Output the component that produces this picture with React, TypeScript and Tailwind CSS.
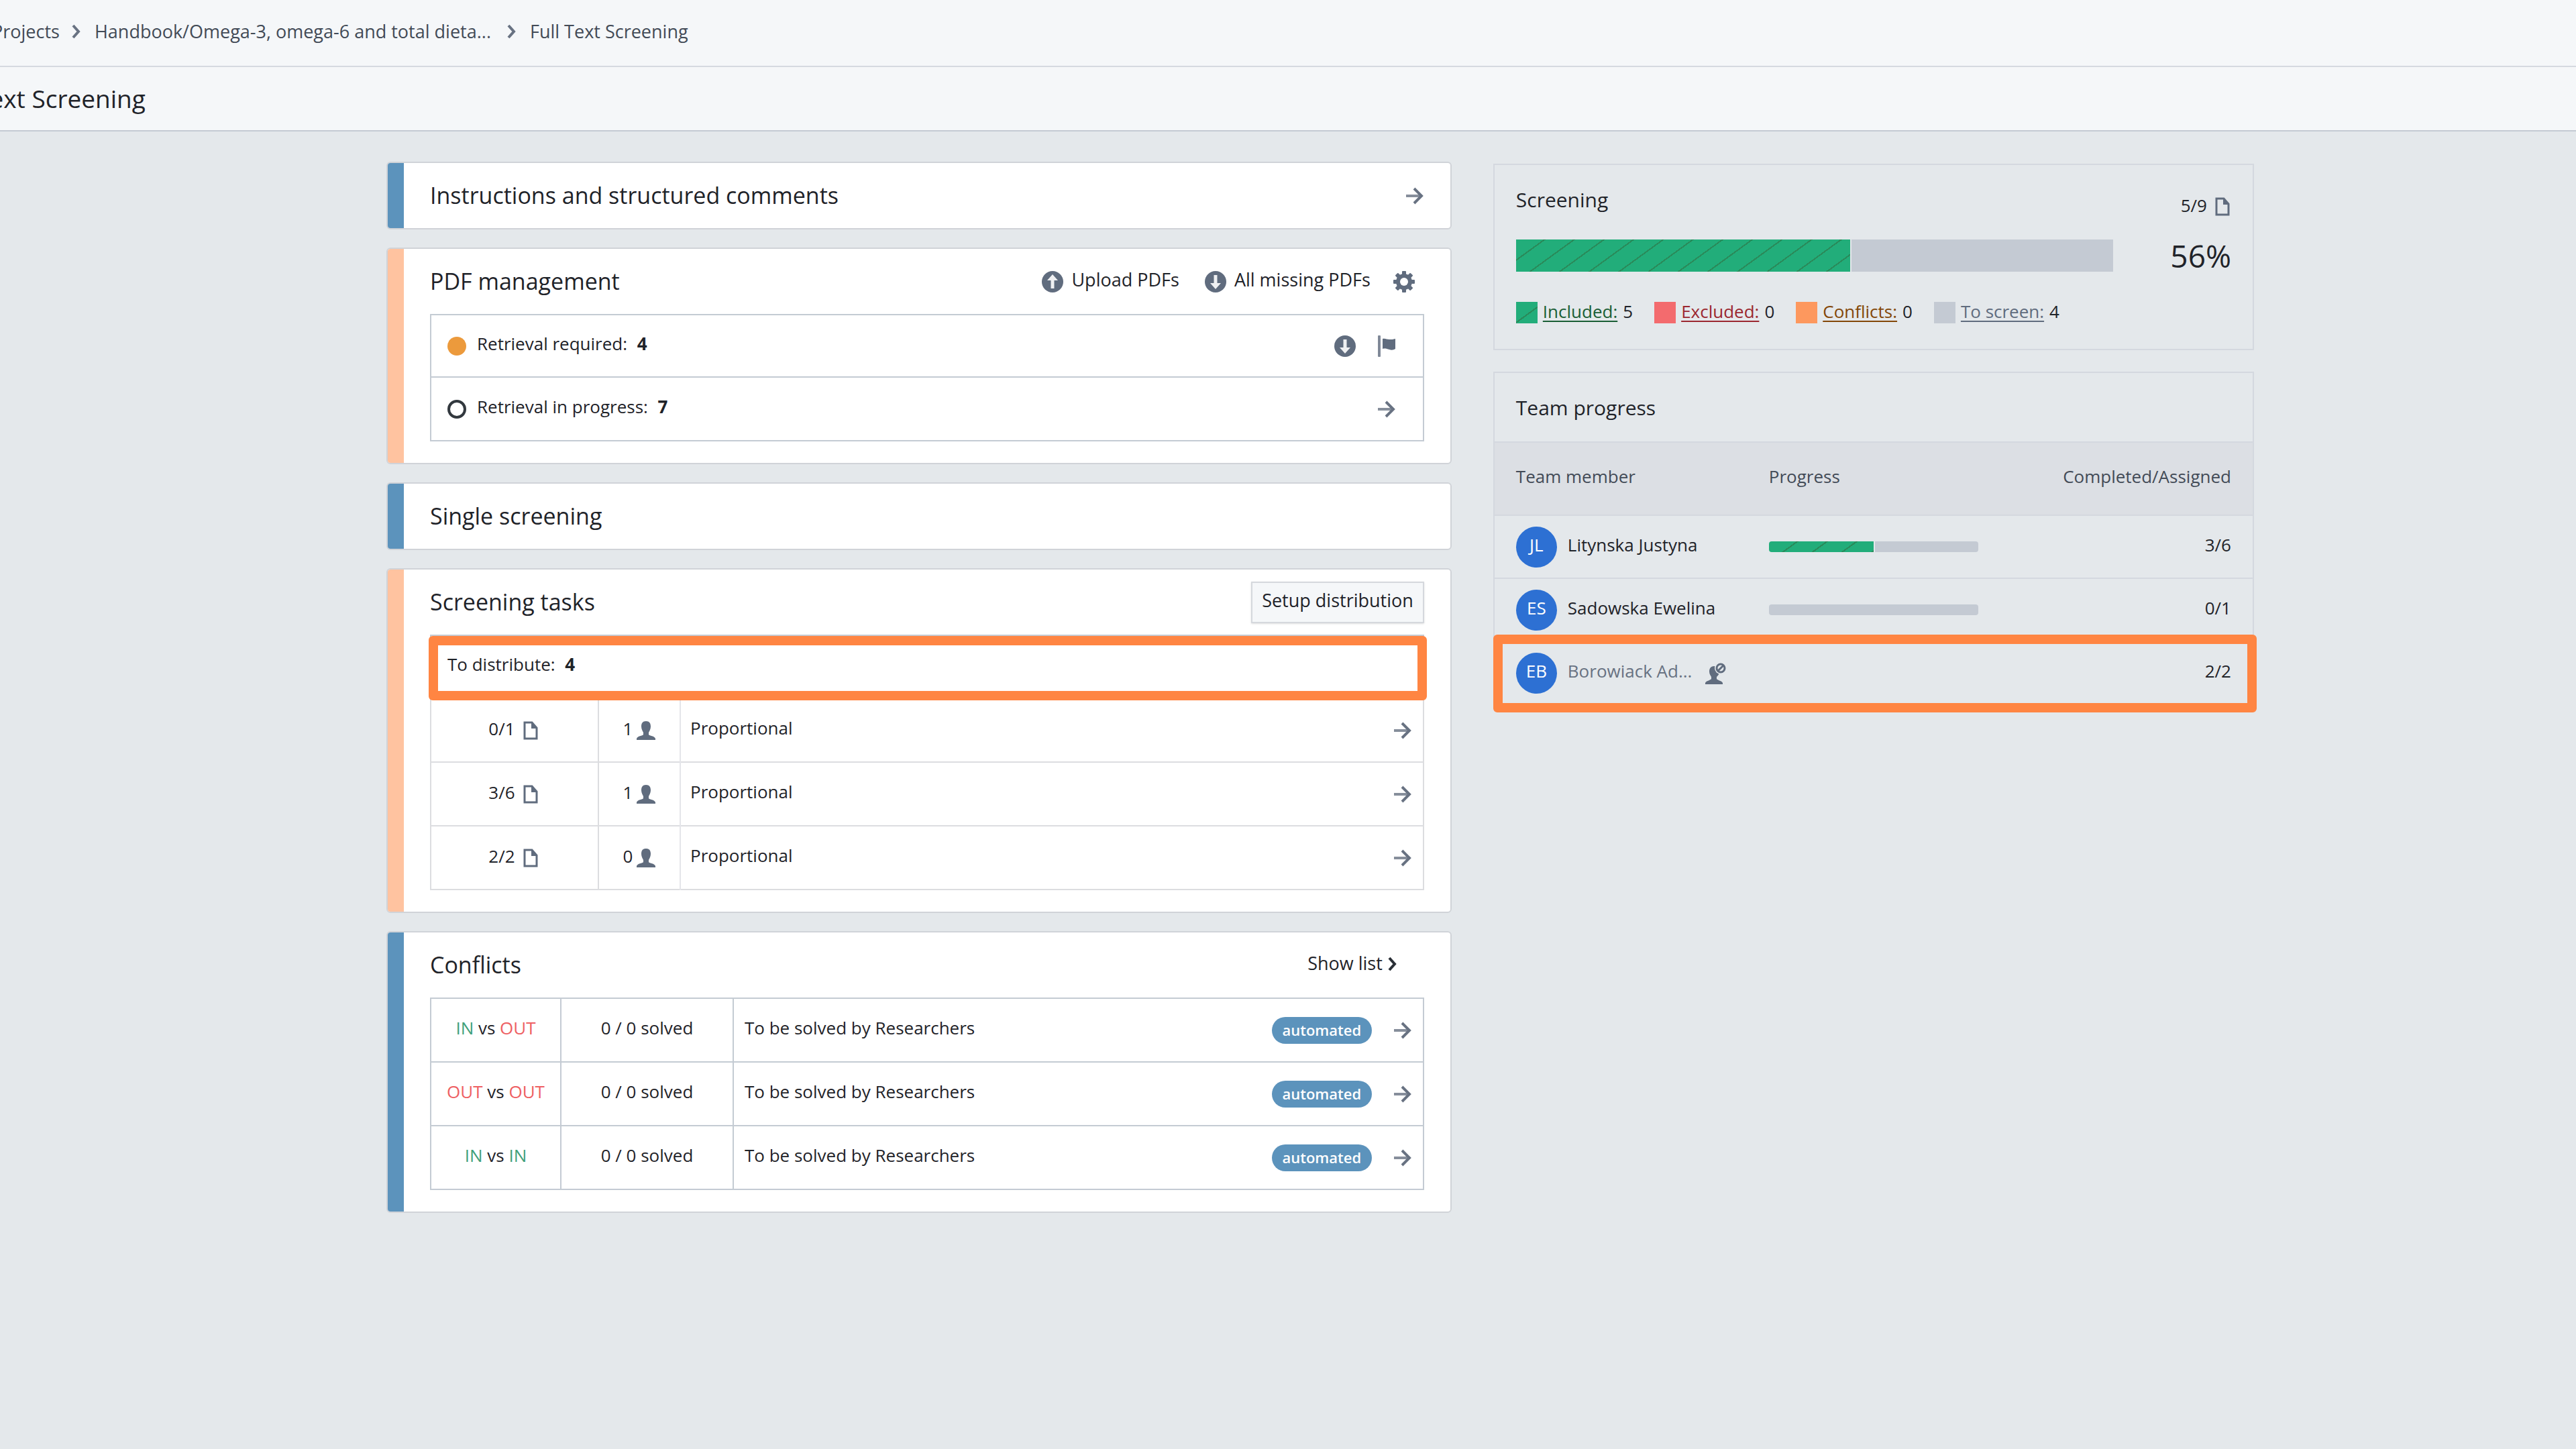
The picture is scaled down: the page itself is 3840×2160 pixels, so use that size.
import { ReactNode } from "react";

type CardProps = {
  title: string;
  tone: "blue" | "peach";
  action?: ReactNode;
  children?: ReactNode;
};

type Member = {
  initials: string;
  name: string;
  done: number;
  assigned: number;
  removed?: boolean;
};

const stripes =
  "bg-[repeating-linear-gradient(144deg,#22ad7a_0_24px,#2a8a5a_24px_26px)]";

const ArrowIcon = () => (
  <svg className="size-7 text-[#687282]" viewBox="0 0 28 28" fill="none" stroke="currentColor" strokeWidth="4">
    <path d="M1 14h24" strokeOpacity=".8" />
    <path d="M13 3l11 11-11 11" />
  </svg>
);

const ChevronIcon = ({ className }: { className: string }) => (
  <svg className={className} viewBox="0 0 14 22" fill="none" stroke="currentColor" strokeWidth="4">
    <path d="M2 2l8 9-8 9" />
  </svg>
);

const CircleArrowIcon = ({ up = false }: { up?: boolean }) => (
  <svg className="size-8 text-[#606c7e]" viewBox="0 0 32 32">
    <circle cx="16" cy="16" r="16" fill="currentColor" />
    <path
      d={up ? "M16 5l8 9h-5.500v12h-5V14H8z" : "M16 27l-8-9h5.500V6h5v12H24z"}
      fill="#fff"
      fillOpacity=".9"
    />
  </svg>
);

const GearIcon = () => (
  <svg className="size-8 text-[#606c7e]" viewBox="0 0 32 32">
    {[0, 45, 90, 135].map((angle) => (
      <rect key={angle} x="13" y="0" width="6" height="32" rx="1" fill="currentColor" transform={`rotate(${angle} 16 16)`} />
    ))}
    <circle cx="16" cy="16" r="12" fill="currentColor" />
    <circle cx="16" cy="16" r="6" fill="#fff" />
  </svg>
);

const FlagIcon = () => (
  <svg className="h-8 w-7 text-[#606c7e]" viewBox="0 0 28 32" fill="currentColor">
    <rect x="1" y="0" width="4" height="32" rx="1" fillOpacity=".8" />
    <path d="M8 5c4-1 6 1 10 1 3 0 6 0 9-1v15c-3 2-6 2-9 1-4-1-6-2-10-1z" />
  </svg>
);

const FileIcon = () => (
  <svg className="h-7 w-[22px] text-[#606c7e]" viewBox="0 0 22 28">
    <path d="M2 2h11l7 8v16H2z" fill="none" stroke="currentColor" strokeWidth="3" />
    <path d="M12 1l9 10h-9z" fill="currentColor" />
  </svg>
);

const PersonIcon = () => (
  <svg className="size-7 text-[#606c7e]" viewBox="0 0 28 28" fill="currentColor">
    <path d="M14 0c5 0 7 3 7 8 0 4-2 7-3 9v3c1 2 9 2 10 6v2H0v-2c1-4 9-4 10-6v-3c-1-2-3-5-3-9 0-5 2-8 7-8z" />
  </svg>
);

const PersonRemovedIcon = () => (
  <svg className="size-8 text-[#606c7e]" viewBox="0 0 32 32">
    <path
      d="M13 5c-5 0-7 4-7 8 0 4 2 6 3 8v3c-1 2-8 3-9 6v2h26v-2c-1-3-8-4-9-6v-3c2-2 4-4 4-8 0-5-3-8-8-8z"
      fill="currentColor"
    />
    <circle cx="23" cy="8" r="9" fill="#e4e8eb" />
    <circle cx="23" cy="8" r="6" fill="none" stroke="currentColor" strokeWidth="3" />
    <path d="M19 12l8-8" stroke="currentColor" strokeWidth="3" />
  </svg>
);

const ArrowLink = ({ label }: { label: string }) => (
  <a href="#" aria-label={label} className="block">
    <ArrowIcon />
  </a>
);

const Card = ({ title, tone, action, children }: CardProps) => (
  <section className="flex overflow-hidden rounded-md border-2 border-[#d0d3d8] bg-white">
    <div className={tone === "blue" ? "w-6 shrink-0 bg-[#5c93bc]" : "w-6 shrink-0 bg-[#ffc3a0]"} />
    <div className="min-w-0 flex-1 px-[39px]">
      <div className="flex h-[97px] items-center justify-between text-[27px]">
        <h2 className="text-[34px]">{title}</h2>
        {action}
      </div>
      {children && <div className="pb-8">{children}</div>}
    </div>
  </section>
);

const tasks = [
  { docs: "0/1", people: 1 },
  { docs: "3/6", people: 1 },
  { docs: "2/2", people: 0 },
];

const conflicts = [
  ["IN", "OUT"],
  ["OUT", "OUT"],
  ["IN", "IN"],
];

const legend = [
  { label: "Included:", value: 5, box: stripes, text: "text-[#1a5e35]" },
  { label: "Excluded:", value: 0, box: "bg-[#f36b6e]", text: "text-[#9b2730]" },
  { label: "Conflicts:", value: 0, box: "bg-[#fd985e]", text: "text-[#834708]" },
  { label: "To screen:", value: 4, box: "bg-[#c4cad3]", text: "text-[#606c7e]" },
];

const members: Member[] = [
  { initials: "JL", name: "Litynska Justyna", done: 3, assigned: 6 },
  { initials: "ES", name: "Sadowska Ewelina", done: 0, assigned: 1 },
  { initials: "EB", name: "Borowiack Ad...", done: 2, assigned: 2, removed: true },
];

const Verdict = ({ value }: { value: string }) => (
  <span className={value === "IN" ? "text-[#41a07a]" : "text-[#ee6063]"}>{value}</span>
);

const PdfManagement = () => (
  <Card
    title="PDF management"
    tone="peach"
    action={
      <div className="flex items-center pr-3.5">
        <button className="mr-[38px] flex items-center gap-3">
          <CircleArrowIcon up />
          <span className="pb-1">Upload PDFs</span>
        </button>
        <button className="mr-[34px] flex items-center gap-3">
          <CircleArrowIcon />
          <span className="pb-1">All missing PDFs</span>
        </button>
        <button aria-label="PDF settings">
          <GearIcon />
        </button>
      </div>
    }
  >
    <ul className="divide-y-2 divide-[#c4cbd3] border-2 border-[#c4cbd3]">
      <li className="flex h-[93px] items-center pr-10 pl-6">
        <span className="size-7 rounded-full bg-[#ec9a3c]" />
        <span className="flex-1 pb-1.5 pl-4">
          Retrieval required: <b className="ml-2 font-bold">4</b>
        </span>
        <button aria-label="Download" className="mr-8">
          <CircleArrowIcon />
        </button>
        <button aria-label="Flag">
          <FlagIcon />
        </button>
      </li>
      <li className="flex h-[93px] items-center pr-10 pl-6">
        <span className="size-7 rounded-full border-4 border-[#32383e]" />
        <span className="flex-1 pb-1.5 pl-4">
          Retrieval in progress: <b className="ml-2 font-bold">7</b>
        </span>
        <ArrowLink label="Open retrieval in progress" />
      </li>
    </ul>
  </Card>
);

const ScreeningTasks = () => (
  <Card
    title="Screening tasks"
    tone="peach"
    action={
      <button className="h-[62px] border-2 border-[#d5d8dd] bg-[#f5f7f9] px-3.5 pb-1 shadow-sm">
        Setup distribution
      </button>
    }
  >
    <div className="relative">
      <table className="w-full table-fixed border-collapse">
        <colgroup>
          <col className="w-[250px]" />
          <col className="w-[122px]" />
          <col />
          <col className="w-[45px]" />
        </colgroup>
        <tbody>
          <tr className="h-[94px] border-2 border-[#c4cbd3]">
            <td colSpan={4} className="pb-2 pl-6">
              To distribute: <b className="ml-2 font-bold">4</b>
            </td>
          </tr>
          {tasks.map((task) => (
            <tr key={task.docs} className="h-[95px] border-2 border-[#dcdde0]">
              <td className="border-r-2 border-[#dcdde0]">
                <div className="flex items-center justify-center gap-3 pr-1">
                  <span className="pb-1">{task.docs}</span>
                  <FileIcon />
                </div>
              </td>
              <td className="border-r-2 border-[#e4e5ea]">
                <div className="flex items-center justify-center gap-1.5">
                  <span className="pb-1">{task.people}</span>
                  <PersonIcon />
                </div>
              </td>
              <td className="pb-1.5 pl-3.5">Proportional</td>
              <td>
                <ArrowLink label="Open task" />
              </td>
            </tr>
          ))}
        </tbody>
      </table>
      {/* highlight frame over the first row */}
      <div className="pointer-events-none absolute -right-1 -left-0.5 top-0.5 h-24 rounded-md border-[14px] border-[#ff8542]" />
    </div>
  </Card>
);

const Conflicts = () => (
  <Card
    title="Conflicts"
    tone="blue"
    action={
      <a href="#" className="flex items-center gap-2 pr-10 pb-1">
        Show list
        <ChevronIcon className="h-[22px] w-3.5 text-[#2a2f36]" />
      </a>
    }
  >
    <table className="w-full table-fixed border-collapse">
      <colgroup>
        <col className="w-[194px]" />
        <col className="w-[257px]" />
        <col />
        <col className="w-[181px]" />
        <col className="w-[45px]" />
      </colgroup>
      <tbody>
        {conflicts.map(([left, right]) => (
          <tr key={left + right} className="h-[95px] border-2 border-[#c4cbd3]">
            <td className="border-r-2 border-[#c4cbd3] pb-1.5 text-center">
              <Verdict value={left} /> vs <Verdict value={right} />
            </td>
            <td className="border-r-2 border-[#c4cbd3] pb-1.5 text-center">0 / 0 solved</td>
            <td className="pb-1.5 pl-4">To be solved by Researchers</td>
            <td>
              <span className="flex h-10 w-[149px] items-center justify-center rounded-full bg-[#5c93bc] text-[22px] font-semibold text-white">
                automated
              </span>
            </td>
            <td>
              <ArrowLink label="Open conflict" />
            </td>
          </tr>
        ))}
      </tbody>
    </table>
  </Card>
);

const ScreeningSummary = () => (
  <section className="border-2 border-[#d4d8df] px-8 pt-8 pb-9">
    <div className="flex h-11 items-start justify-between">
      <h3 className="text-[30px] leading-10">Screening</h3>
      <div className="flex items-center gap-3 pt-3 pr-0.5">
        <span className="pb-1 leading-8">5/9</span>
        <FileIcon />
      </div>
    </div>
    <div className="mt-[35px] flex items-center">
      <div className="flex h-12 flex-1 gap-0.5">
        <div className={`${stripes} w-[56%]`} />
        <div className="flex-1 bg-[#c4cad3]" />
      </div>
      <span className="w-[176px] text-right text-[46px] leading-12">56%</span>
    </div>
    <ul className="mt-[43px] flex gap-8">
      {legend.map((item) => (
        <li key={item.label} className="flex items-center gap-2">
          <span className={`${item.box} size-8`} />
          <a href="#" className={`${item.text} pb-1 leading-8 underline decoration-2 underline-offset-4`}>
            {item.label}
          </a>
          <span className="pb-1 leading-8">{item.value}</span>
        </li>
      ))}
    </ul>
  </section>
);

const TeamProgress = () => (
  <section className="relative mt-8 border-2 border-[#d4d8df]">
    <h3 className="flex h-[102px] items-center px-8 text-[30px]">Team progress</h3>
    <table className="w-full table-fixed">
      <thead>
        <tr className="h-[109px] border-y-2 border-[#d4d8df] bg-[#dcdfe4] text-left text-[#434b57]">
          <th className="w-[409px] pb-1.5 pl-8 font-normal">Team member</th>
          <th className="pb-1.5 font-normal">Progress</th>
          <th className="pr-8 pb-1.5 text-right font-normal">Completed/Assigned</th>
        </tr>
      </thead>
      <tbody className="divide-y-2 divide-[#d4d8df]">
        {members.map((member) => (
          <tr key={member.initials} className="h-[94px]">
            <td className="pl-8">
              <div className="flex items-center">
                <span className="flex size-[61px] items-center justify-center rounded-full bg-[#2d70d3] pb-1.5 text-white">
                  {member.initials}
                </span>
                <span className={member.removed ? "pb-1.5 pl-4 text-[#687282]" : "pb-1.5 pl-4"}>{member.name}</span>
                {member.removed && (
                  <span className="pl-5">
                    <PersonRemovedIcon />
                  </span>
                )}
              </div>
            </td>
            <td>
              {!member.removed && (
                <div className="flex h-4 w-[312px] gap-0.5 overflow-hidden rounded-sm">
                  {member.done > 0 && (
                    <div className={stripes} style={{ width: `${(member.done / member.assigned) * 100}%` }} />
                  )}
                  <div className="flex-1 bg-[#c4cad3]" />
                </div>
              )}
            </td>
            <td className="pr-8 pb-1.5 text-right">
              {member.done}/{member.assigned}
            </td>
          </tr>
        ))}
      </tbody>
    </table>
    {/* highlight frame over the last row */}
    <div className="pointer-events-none absolute -right-1.5 -bottom-3 -left-0.5 h-[116px] rounded-md border-[14px] border-[#ff8542]" />
  </section>
);

const App = () => {
  return (
    <div className="min-h-screen overflow-hidden bg-[#e4e8eb] font-['Open_Sans','Noto_Sans',sans-serif] text-[26px] text-[#1f2329]">
      <nav
        aria-label="Breadcrumb"
        className="-ml-3 flex h-[100px] items-center border-b-2 border-[#d5d9e0] bg-[#f5f7f9] pb-1 text-[27px] text-[#434b57]"
      >
        <a href="#">Projects</a>
        <ChevronIcon className="mr-5 ml-[18px] h-[22px] w-3.5 text-[#687282]" />
        <a href="#">Handbook/Omega-3, omega-6 and total dieta...</a>
        <ChevronIcon className="mr-5 ml-6 h-[22px] w-3.5 text-[#687282]" />
        <a href="#">Full Text Screening</a>
      </nav>
      <header className="-ml-[106px] flex h-24 items-center border-b-2 border-[#c4cad3] bg-[#f5f7f9]">
        <h1 className="text-[37px]">Full Text Screening</h1>
      </header>

      <main className="grid grid-cols-[7fr_5fr] gap-[62px] pt-[45px] pr-[12.5%] pb-10 pl-[15%]">
        <div className="flex min-w-0 flex-col gap-[27px]">
          <Card
            title="Instructions and structured comments"
            tone="blue"
            action={<ArrowLink label="Open instructions" />}
          />
          <PdfManagement />
          <Card title="Single screening" tone="blue" />
          <ScreeningTasks />
          <Conflicts />
        </div>
        <aside className="min-w-0 pt-[3px]">
          <ScreeningSummary />
          <TeamProgress />
        </aside>
      </main>
    </div>
  );
};

export default App;
